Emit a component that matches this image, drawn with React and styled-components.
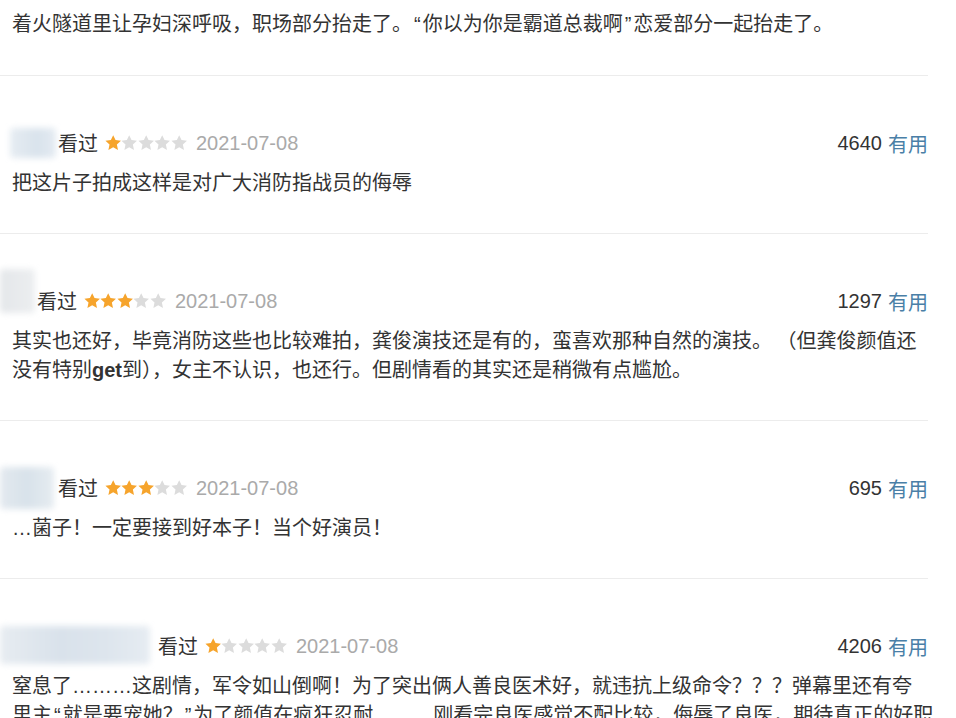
import React from "react";
import styled, { createGlobalStyle } from "styled-components";

const Global = createGlobalStyle`
  html, body { margin: 0; padding: 0; background: #fff; }
  body { overflow: hidden; }
`;

const Page = styled.div`
  width: 928px;
  font-family: "Noto Sans CJK SC", "Liberation Sans", sans-serif;
  color: #333;
  font-size: 20px;
`;

const Tail = styled.div`
  padding: 8px 0 38px 12px;
  line-height: 29px;
  white-space: nowrap;
  border-bottom: 1px solid #ececec;
`;

const Review = styled.div`
  padding: 52px 0 37px;
  border-bottom: 1px solid #ececec;
`;

const Header = styled.div`
  display: flex;
  align-items: center;
  height: 30px;
  margin-bottom: 9px;
`;

const Avatar = styled.div`
  flex: none;
  width: ${(p) => p.$w}px;
  height: ${(p) => p.$h}px;
  margin-left: ${(p) => p.$ml || 0}px;
  margin-top: ${(p) => p.$mt || 0}px;
  margin-right: ${(p) => p.$mr || 0}px;
  background: ${(p) => p.$bg};
  filter: blur(3px);
  border-radius: 4px;
`;

const Watched = styled.span`
  line-height: 30px;
  color: #333;
`;

const Stars = styled.span`
  display: inline-flex;
  align-items: center;
  margin-left: 7px;
  gap: 0;
`;

const StarSvg = styled.svg`
  flex: none;
  display: block;
  width: 16.4px;
  height: 16px;
`;

const DateText = styled.span`
  margin-left: 9px;
  font-family: "Liberation Sans", Arial, sans-serif;
  color: #aaa;
`;

const Votes = styled.span`
  margin-left: auto;
  display: flex;
  align-items: center;
  gap: 6px;
`;

const Count = styled.span`
  font-family: "Liberation Sans", Arial, sans-serif;
  color: #333;
`;

const Useful = styled.span`
  color: #4a7fa7;
`;

const Content = styled.div`
  padding-left: 12px;
  line-height: 29px;
  white-space: nowrap;
`;

const Latin = styled.b`
  font-family: "Liberation Sans", Arial, sans-serif;
  font-weight: 700;
  line-height: 1;
`;

const Mark = styled.span`
  font-family: "Liberation Sans", Arial, sans-serif;
  line-height: 1;
  margin: 0 ${(p) => p.$pad || 0}px;
`;

const Star = ({ on }) => (
  <StarSvg viewBox="0 0 20 20">
    <polygon
      points="10,0.3 12.9,6.4 19.7,7.2 14.6,11.9 16,18.7 10,15.3 4,18.7 5.4,11.9 0.3,7.2 7.1,6.4"
      fill={on ? "#f6a42c" : "#dcdcdc"}
    />
  </StarSvg>
);

const Rating = ({ n }) => (
  <Stars>
    {[0, 1, 2, 3, 4].map((i) => (
      <Star key={i} on={i < n} />
    ))}
  </Stars>
);

const Q = ({ c }) => <Mark $pad={2}>{c}</Mark>;
const Dots = ({ c }) => <Mark>{c}</Mark>;

const reviews = [
  {
    avatar: { w: 46, h: 30, ml: 10, mr: 2, mt: 0, bg: "linear-gradient(90deg,#e6ecf2,#d9e3ec 60%,#e4ebf2)" },
    stars: 1,
    count: "4640",
    lines: ["把这片子拍成这样是对广大消防指战员的侮辱"],
  },
  {
    avatar: { w: 35, h: 44, ml: 0, mr: 2, mt: -20, bg: "linear-gradient(90deg,#e4e7ea,#eceef0)" },
    stars: 3,
    count: "1297",
    lines: [
      "其实也还好，毕竟消防这些也比较难拍，龚俊演技还是有的，蛮喜欢那种自然的演技。 （但龚俊颜值还",
      <>
        没有特别<Latin>get</Latin>到），女主不认识，也还行。但剧情看的其实还是稍微有点尴尬。
      </>,
    ],
  },
  {
    avatar: { w: 54, h: 42, ml: 0, mr: 4, mt: 0, bg: "linear-gradient(90deg,#e3e9ef,#d8e2ea 50%,#e6ecf1)" },
    stars: 3,
    count: "695",
    lines: [
      <>
        <Dots c="…" />菌子！一定要接到好本子！当个好演员！
      </>,
    ],
  },
  {
    avatar: { w: 150, h: 38, ml: 0, mr: 8, mt: -2, bg: "linear-gradient(90deg,#e7ecf1,#d9e2eb 40%,#dde5ed 70%,#e6ecf2)" },
    stars: 1,
    count: "4206",
    lines: [
      <>
        窒息了<Dots c="………" />这剧情，军令如山倒啊！为了突出俩人善良医术好，就违抗上级命令？？？弹幕里还有夸
      </>,
      <>
        里主<Q c="“" />就是要宠她？<Q c="”" />为了颜值在疯狂忍耐<Dots c="………" />刚看完良医感觉不配比较，侮辱了良医，期待真正的好职
      </>,
      "业剧。",
    ],
  },
];

export default function App() {
  return (
    <Page>
      <Global />
      <Tail>
        着火隧道里让孕妇深呼吸，职场部分抬走了。<Q c="“" />你以为你是霸道总裁啊<Q c="”" />恋爱部分一起抬走了。
      </Tail>
      {reviews.map((r, i) => (
        <Review key={i}>
          <Header>
            <Avatar $w={r.avatar.w} $h={r.avatar.h} $ml={r.avatar.ml} $mr={r.avatar.mr} $mt={r.avatar.mt} $bg={r.avatar.bg} />
            <Watched>看过</Watched>
            <Rating n={r.stars} />
            <DateText>2021-07-08</DateText>
            <Votes>
              <Count>{r.count}</Count>
              <Useful>有用</Useful>
            </Votes>
          </Header>
          <Content>
            {r.lines.map((l, j) => (
              <React.Fragment key={j}>
                {j > 0 && <br />}
                {l}
              </React.Fragment>
            ))}
          </Content>
        </Review>
      ))}
    </Page>
  );
}
